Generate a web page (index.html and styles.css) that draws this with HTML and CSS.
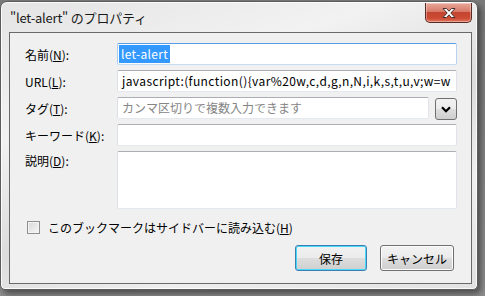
FILE: index.html
```html
<!DOCTYPE html>
<html lang="ja">
<head>
    <meta charset="UTF-8">
    <title>"let-alert" のプロパティ</title>
    <link rel="stylesheet" href="styles.css">
</head>

<body>
    <div class="window">
        <div class="titlebar">
            <span class="title">"let-alert" のプロパティ</span>
            <button class="close-btn" type="button">
                <svg width="18" height="12" viewBox="0 0 18 12">
                    <path d="M3 1.5h3.5L9 4.2 11.5 1.5H15L10.8 6 15 10.5h-3.5L9 7.8 6.5 10.5H3L7.2 6z"
                          fill="#fff" stroke="#4a3030" stroke-width="1" stroke-linejoin="round"/>
                </svg>
            </button>
        </div>

        <div class="panel">
            <div class="fields">
                <label class="field-label">名前(<u>N</u>):</label>
                <div class="textbox focused"><span class="selected">let-alert</span></div>

                <label class="field-label">URL(<u>L</u>):</label>
                <div class="textbox url">javascript:(function(){var%20w,c,d,g,n,N,i,k,s,t,u,v;w=w</div>

                <label class="field-label">タグ(<u>T</u>):</label>
                <div class="tag-row">
                    <div class="textbox placeholder">カンマ区切りで複数入力できます</div>
                    <button class="drop-btn" type="button">
                        <svg width="10" height="7" viewBox="0 0 10 7">
                            <path d="M1 1.2l4 4 4-4" fill="none" stroke="#000" stroke-width="2.2"/>
                        </svg>
                    </button>
                </div>

                <label class="field-label">キーワード(<u>K</u>):</label>
                <div class="textbox"></div>

                <label class="field-label top">説明(<u>D</u>):</label>
                <div class="textbox textarea"></div>
            </div>

            <div class="check-row">
                <span class="checkbox"></span>
                <span>このブックマークはサイドバーに読み込む(<u>H</u>)</span>
            </div>

            <div class="actions">
                <button class="btn default" type="button">保存</button>
                <button class="btn" type="button">キャンセル</button>
            </div>
        </div>
    </div>
</body>
</html>
```

FILE: styles.css
```css
* {
    box-sizing: border-box;
    margin: 0;
    padding: 0;
}

body {
    width: 485px;
    height: 296px;
    overflow: hidden;
    background: linear-gradient(180deg, #7a7a7a, #8e8e8e);
    font-family: "Noto Sans CJK JP", "Noto Sans", sans-serif;
    font-size: 12px;
    color: #000;
}

.window {
    width: 478px;
    height: 289px;
    margin-top: 1px;
    border: 1px solid #5c5c5c;
    border-radius: 7px 7px 5px 5px;
    background: linear-gradient(160deg, #e4e4e4 0%, #f2f2f2 30%, #dcdcdc 55%, #eeeeee 75%, #e2e2e2 100%);
    box-shadow: inset 0 0 0 1px rgba(255, 255, 255, 0.8), 3px 4px 6px rgba(0, 0, 0, 0.45);
    padding: 0 5px 5px 8px;
    display: flex;
    flex-direction: column;
}

.titlebar {
    height: 30px;
    display: flex;
    align-items: flex-start;
    justify-content: space-between;
}

.title {
    font-size: 13px;
    color: #1a1a1a;
    margin-top: 6px;
    margin-left: 1px;
    letter-spacing: -0.2px;
}

.close-btn {
    width: 47px;
    height: 20px;
    margin-top: 1px;
    border: 1px solid #5a2a22;
    border-top: none;
    border-radius: 0 0 5px 5px;
    background: linear-gradient(180deg, #e9a99b 0%, #d77a68 45%, #c3452f 50%, #cd4a34 80%, #e0785e 100%);
    box-shadow: inset 0 0 0 1px rgba(255, 255, 255, 0.35);
    display: flex;
    align-items: center;
    justify-content: center;
}

.panel {
    flex: 1;
    border: 1px solid #6a6a6a;
    background-color: #f0f0f0;
    padding: 10px 14px 0 14px;
    display: flex;
    flex-direction: column;
}

.fields {
    display: grid;
    grid-template-columns: 93px 1fr;
    grid-template-rows: 22px 22px 22px 22px 58px;
    row-gap: 5px;
}

.field-label {
    display: flex;
    align-items: center;
    padding-left: 1px;
    white-space: nowrap;
}

.field-label.top {
    align-items: flex-start;
    padding-top: 1px;
}

.textbox {
    height: 22px;
    background: #fff;
    border: 1px solid;
    border-color: #abadb3 #e2e3ea #e3e9ef #dbdfe6;
    border-radius: 2px;
    padding: 0 4px;
    line-height: 19px;
    white-space: nowrap;
    overflow: hidden;
}

.textbox.url {
    letter-spacing: 0.4px;
}

.textbox.focused {
    border-color: #569de5 #b5d2f1 #c5dcf3 #a9cbee;
    padding-left: 1px;
}

.selected {
    display: inline-block;
    background-color: #3399ff;
    color: #fff;
    line-height: 18px;
    padding: 0 2px;
    letter-spacing: 0.3px;
}

.placeholder {
    color: #858585;
}

.textarea {
    height: 58px;
}

.tag-row {
    display: flex;
    gap: 6px;
}

.tag-row .textbox {
    flex: 1;
}

.drop-btn {
    width: 22px;
    height: 22px;
    margin-top: 1px;
    border: 1px solid #707070;
    border-radius: 3px;
    background: linear-gradient(180deg, #f2f2f2 0%, #ebebeb 50%, #dddddd 51%, #cfcfcf 100%);
    display: flex;
    align-items: center;
    justify-content: center;
}

.check-row {
    display: flex;
    align-items: center;
    gap: 8px;
    padding-left: 3px;
    height: 14px;
    margin-top: 11px;
}

.checkbox {
    width: 13px;
    height: 13px;
    border: 1px solid #8f8f8f;
    background: linear-gradient(135deg, #d8d8d8, #f7f7f7);
    box-shadow: inset 0 0 0 1px #f4f4f4;
}

.actions {
    display: flex;
    justify-content: flex-end;
    gap: 13px;
    margin-top: 11px;
    padding-right: 3px;
}

.btn {
    height: 26px;
    min-width: 72px;
    padding: 0 6px;
    font-family: inherit;
    font-size: 12px;
    color: #000;
    border: 1px solid #707070;
    border-radius: 3px;
    background: linear-gradient(180deg, #f2f2f2 0%, #ebebeb 50%, #dddddd 51%, #cfcfcf 100%);
    box-shadow: inset 0 0 0 1px #fcfcfc;
}

.btn.default {
    border-color: #3c7fb1;
    box-shadow: inset 0 0 0 1px #48d8fb;
}
```
